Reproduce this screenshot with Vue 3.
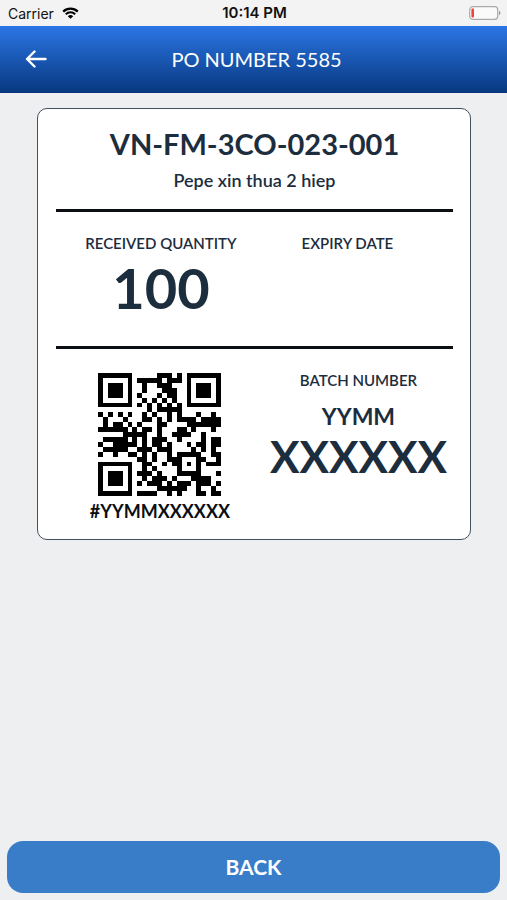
<script setup>
import { ref } from 'vue'

const po = ref('5585')
const item = {
  code: 'VN-FM-3CO-023-001',
  name: 'Pepe xin thua 2 hiep',
  quantity: 100,
  expiry: '',
  batchPrefix: 'YYMM',
  batchSerial: 'XXXXXX',
}

// Version 2 symbol, error correction M, mask 0, byte mode
const SIZE = 25
const DATA_WORDS = 28
const EC_WORDS = 16
const FORMAT = '101010000010010'

function gfMultiply(a, b) {
  let result = 0
  for (let i = 7; i >= 0; i--) {
    result = (result << 1) ^ ((result >> 7) * 0x11d)
    result ^= ((b >> i) & 1) * a
  }
  return result
}

function errorWords(words) {
  const divisor = new Array(EC_WORDS).fill(0)
  divisor[EC_WORDS - 1] = 1
  let root = 1
  for (let i = 0; i < EC_WORDS; i++) {
    for (let j = 0; j < EC_WORDS; j++) {
      divisor[j] = gfMultiply(divisor[j], root)
      if (j + 1 < EC_WORDS) divisor[j] ^= divisor[j + 1]
    }
    root = gfMultiply(root, 2)
  }
  const remainder = new Array(EC_WORDS).fill(0)
  for (const word of words) {
    const factor = word ^ remainder.shift()
    remainder.push(0)
    divisor.forEach((d, i) => { remainder[i] ^= gfMultiply(d, factor) })
  }
  return remainder
}

function encode(text) {
  const bin = (n, len) => n.toString(2).padStart(len, '0')
  let bits = '0100' + bin(text.length, 8)
  for (const ch of text) bits += bin(ch.charCodeAt(0), 8)
  bits += '0000'
  const words = bits.match(/.{8}/g).map((b) => parseInt(b, 2))
  for (let pad = 0xec; words.length < DATA_WORDS; pad ^= 0xec ^ 0x11) words.push(pad)
  return [...words, ...errorWords(words)].map((w) => bin(w, 8)).join('')
}

function buildMatrix(text) {
  const m = Array.from({ length: SIZE }, () => new Array(SIZE).fill(null))
  const set = (r, c, v) => {
    if (r >= 0 && c >= 0 && r < SIZE && c < SIZE) m[r][c] = v ? 1 : 0
  }
  for (let i = 0; i < SIZE; i++) {
    set(6, i, i % 2 === 0)
    set(i, 6, i % 2 === 0)
  }
  for (const [r, c] of [[3, 3], [3, SIZE - 4], [SIZE - 4, 3]]) {
    for (let y = -4; y <= 4; y++) {
      for (let x = -4; x <= 4; x++) {
        const d = Math.max(Math.abs(x), Math.abs(y))
        set(r + y, c + x, d !== 2 && d !== 4)
      }
    }
  }
  for (let y = -2; y <= 2; y++) {
    for (let x = -2; x <= 2; x++) set(18 + y, 18 + x, Math.max(Math.abs(x), Math.abs(y)) !== 1)
  }
  const along = [0, 1, 2, 3, 4, 5, 7, 8]
  for (let i = 0; i < 15; i++) {
    const v = FORMAT[i] === '1'
    if (i < 8) set(8, along[i], v)
    else set(along[14 - i], 8, v)
    if (i < 7) set(SIZE - 1 - i, 8, v)
    else set(8, SIZE - 15 + i, v)
  }
  set(SIZE - 8, 8, true)

  const stream = encode(text)
  let k = 0
  let upward = true
  for (let right = SIZE - 1; right > 0; right -= 2) {
    if (right === 6) right = 5
    for (let n = 0; n < SIZE; n++) {
      const r = upward ? SIZE - 1 - n : n
      for (const c of [right, right - 1]) {
        if (m[r][c] !== null) continue
        m[r][c] = Number(stream[k++] || 0) ^ ((r + c) % 2 === 0 ? 1 : 0)
      }
    }
    upward = !upward
  }
  return m
}

const qrPath = buildMatrix('this is a QR code')
  .flatMap((row, y) => row.map((v, x) => (v ? `M${x} ${y}h1v1h-1z` : '')))
  .join('')
</script>

<template>
  <div class="screen">
    <div class="status">
      <div class="carrier">
        <span>Carrier</span>
        <svg class="wifi" viewBox="0 0 17 12" aria-hidden="true">
          <path d="M1.2 4.6a10.4 10.4 0 0 1 14.6 0" fill="none" stroke="#000" stroke-width="2.2" />
          <path d="M3.8 7.3a6.7 6.7 0 0 1 9.4 0" fill="none" stroke="#000" stroke-width="2" />
          <path d="M8.5 11.8 5.8 9.2a3.9 3.9 0 0 1 5.4 0z" />
        </svg>
      </div>
      <span class="time">10:14 PM</span>
      <svg class="battery" viewBox="0 0 32 14" aria-hidden="true">
        <rect x="0.7" y="0.7" width="28" height="12.6" rx="3" fill="#fafafa" stroke="#aaa" stroke-width="1.2" />
        <rect x="2.4" y="2.6" width="2.6" height="8.8" rx="0.8" fill="#f5413b" />
        <path d="M30 4.8c2 .8 2 3.6 0 4.4z" fill="#999" />
      </svg>
    </div>

    <header class="bar">
      <button class="nav" type="button" aria-label="Go back">
        <svg viewBox="0 0 22 18" aria-hidden="true">
          <path d="M9.5 1.5 2 9l7.5 7.5M2 9h18.5" fill="none" stroke="#fff" stroke-width="2.4" stroke-linecap="round" stroke-linejoin="round" />
        </svg>
      </button>
      <h1>PO NUMBER {{ po }}</h1>
    </header>

    <main>
      <section class="card">
        <div class="top">
          <h2>{{ item.code }}</h2>
          <p>{{ item.name }}</p>
        </div>
        <div class="row amounts">
          <div class="cell">
            <span class="label">RECEIVED QUANTITY</span>
            <strong class="quantity">{{ item.quantity }}</strong>
          </div>
          <div class="cell">
            <span class="label">EXPIRY DATE</span>
            <strong v-if="item.expiry">{{ item.expiry }}</strong>
          </div>
        </div>
        <div class="row batch">
          <div class="cell">
            <svg class="qr" viewBox="0 0 25 25" role="img" aria-label="QR code" shape-rendering="crispEdges">
              <path :d="qrPath" />
            </svg>
            <strong class="tag">#{{ item.batchPrefix }}{{ item.batchSerial }}</strong>
          </div>
          <div class="cell">
            <span class="label">BATCH NUMBER</span>
            <strong class="prefix">{{ item.batchPrefix }}</strong>
            <strong class="serial">{{ item.batchSerial }}</strong>
          </div>
        </div>
      </section>
    </main>

    <footer>
      <button class="back" type="button">BACK</button>
    </footer>
  </div>
</template>

<style>
body {
  margin: 0;
  background: #edeff1;
}
</style>

<style scoped>
.screen {
  min-height: 100vh;
  display: flex;
  flex-direction: column;
  background: #edeff1;
  color: #1c2d3d;
  font-family: Lato, "Open Sans", sans-serif;
}

.status {
  height: 26px;
  box-sizing: border-box;
  padding: 0 6px 0 8px;
  display: grid;
  grid-template-columns: 1fr auto 1fr;
  align-items: center;
  background: #f3f3f3;
  color: #111;
  font-family: Inter, sans-serif;
  font-size: 14px;
}

.carrier {
  display: flex;
  align-items: center;
  gap: 8px;
}

.wifi {
  width: 17px;
  height: 12px;
}

.time {
  font-size: 15px;
  line-height: 18px;
  font-weight: 600;
}

.battery {
  width: 32px;
  height: 14px;
  justify-self: end;
}

.bar {
  height: 67px;
  box-sizing: border-box;
  padding-bottom: 2px;
  display: grid;
  grid-template-columns: 72px 1fr 72px;
  align-items: center;
  background: linear-gradient(#2b76e5, #07387f);
  color: #fff;
}

.nav {
  padding: 12px 0;
  border: 0;
  background: none;
  display: flex;
  justify-content: center;
}

.nav svg {
  width: 22px;
  height: 18px;
}

h1 {
  margin: 0;
  padding-left: 6px;
  font-size: 20px;
  line-height: 24px;
  font-weight: 400;
  text-align: center;
}

main {
  flex: 1;
  padding: 15px 36px 15px 37px;
}

.card {
  padding: 17px 17px 18px 18px;
  border: 1px solid #44515c;
  border-radius: 10px;
  background: #fff;
}

.top {
  padding-bottom: 19px;
  text-align: center;
}

h2 {
  margin: 0;
  font-size: 29px;
  line-height: 36px;
  font-weight: 700;
}

p {
  margin: 8px 0 0;
  font-size: 18px;
  line-height: 20px;
  font-weight: 600;
}

.row {
  display: grid;
  grid-template-columns: 11fr 10fr;
  border-top: 3px solid #0b0e12;
}

.cell {
  display: flex;
  flex-direction: column;
  align-items: center;
}

.amounts {
  padding: 22px 24px 28px 0;
  grid-template-columns: 9fr 7fr;
}

.label {
  font-size: 15px;
  line-height: 18px;
  font-weight: 600;
}

.quantity {
  margin-top: 6px;
  font-size: 56px;
  line-height: 60px;
}

.batch {
  padding-top: 22px;
}

.qr {
  width: 123px;
  height: 123px;
  margin-top: 2px;
}

.tag {
  margin-top: 5px;
  font-size: 18px;
  line-height: 20px;
  color: #0b0e12;
}

.prefix {
  margin-top: 13px;
  font-size: 23px;
  line-height: 28px;
}

.serial {
  margin-top: 2px;
  font-size: 44px;
  line-height: 48px;
}

footer {
  padding: 0 7px 7px;
}

.back {
  width: 100%;
  height: 52px;
  border: 0;
  border-radius: 16px;
  background: #397dc9;
  color: #fff;
  font: 700 21px/24px Lato, "Open Sans", sans-serif;
}
</style>
